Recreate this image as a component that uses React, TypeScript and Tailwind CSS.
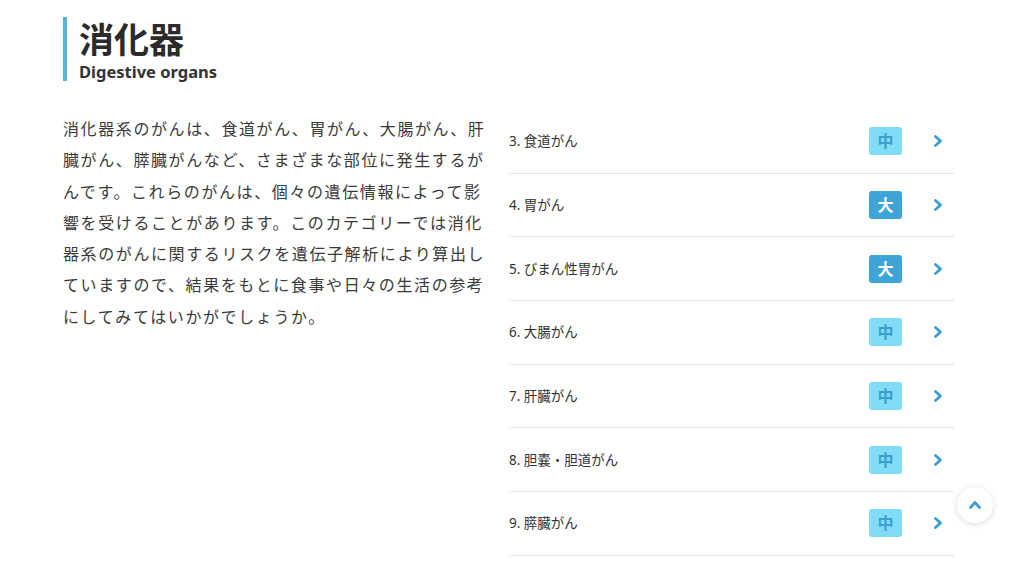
import React from 'react';

const ITEMS: { label: string; level: '中' | '大' }[] = [
  { label: '3. 食道がん', level: '中' },
  { label: '4. 胃がん', level: '大' },
  { label: '5. びまん性胃がん', level: '大' },
  { label: '6. 大腸がん', level: '中' },
  { label: '7. 肝臓がん', level: '中' },
  { label: '8. 胆嚢・胆道がん', level: '中' },
  { label: '9. 膵臓がん', level: '中' },
];

function Chevron({ up = false }: { up?: boolean }) {
  return (
    <svg width="12" height="14" viewBox="0 0 12 14" fill="none" className={up ? '-rotate-90' : ''}>
      <path d="M3.5 2.5 L8.5 7 L3.5 11.5" stroke="#3a9fcc" strokeWidth="2.8" strokeLinecap="round" strokeLinejoin="round" />
    </svg>
  );
}

export default function App() {
  return (
    <div
      className="relative w-[1024px] h-[570px] bg-white overflow-hidden text-[#333]"
      style={{ fontFamily: '"Noto Sans", "Noto Sans CJK JP", sans-serif' }}
    >
      <div className="flex gap-[22px] pl-[63px] pt-[17px]">
        {/* left column */}
        <div className="w-[424px] shrink-0">
          <div className="border-l-4 border-[#5ab4da] pl-3">
            <h1 className="text-[35px] leading-[46px] font-bold text-[#2b2b2b]">消化器</h1>
            <p className="text-[16.5px] leading-[18px] font-bold text-[#333]">Digestive organs</p>
          </div>
          <p className="mt-[33px] text-[16px] leading-[31.3px] tracking-[0.1em] text-[#3a3a3a]">
            消化器系のがんは、食道がん、胃がん、大腸がん、肝臓がん、膵臓がんなど、さまざまな部位に発生するがんです。これらのがんは、個々の遺伝情報によって影響を受けることがあります。このカテゴリーでは消化器系のがんに関するリスクを遺伝子解析により算出していますので、結果をもとに食事や日々の生活の参考にしてみてはいかがでしょうか。
          </p>
        </div>

        {/* right column */}
        <div className="w-[445px] mt-[93px]">
          {ITEMS.map((item) => (
            <div key={item.label} className="h-[63.7px] flex items-center border-b border-[#e6e6e6]">
              <span className="flex-1 text-[13.5px] text-[#333]">{item.label}</span>
              <span
                className={
                  item.level === '大'
                    ? 'w-[33px] h-[28px] rounded-[3px] flex items-center justify-center text-[16px] font-bold bg-[#3ea5d6] text-white'
                    : 'w-[33px] h-[28px] rounded-[3px] flex items-center justify-center text-[16px] font-bold bg-[#80dcf7] text-[#3b9fcf]'
                }
              >
                {item.level}
              </span>
              <span className="w-[52px] flex justify-end pr-[10px]">
                <Chevron />
              </span>
            </div>
          ))}
        </div>
      </div>

      {/* back to top */}
      <button className="absolute left-[957px] top-[487px] w-9 h-9 rounded-full bg-white shadow-[0_1px_6px_rgba(0,0,0,0.15)] flex items-center justify-center">
        <Chevron up />
      </button>
    </div>
  );
}
